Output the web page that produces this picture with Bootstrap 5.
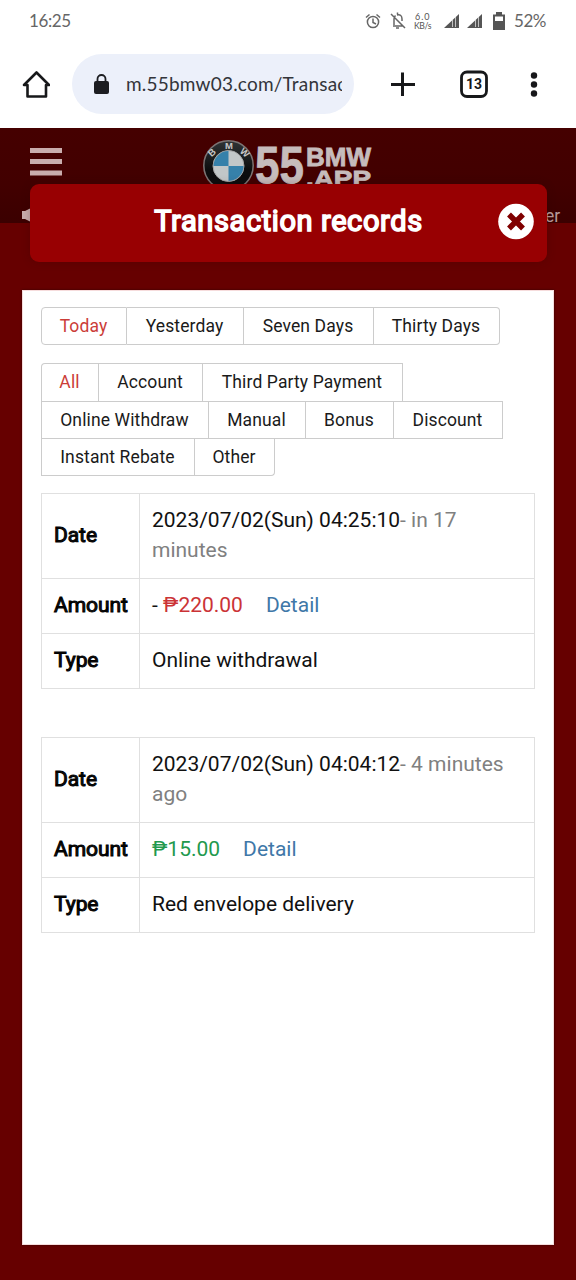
<!DOCTYPE html>
<html lang="en">
<head>
<meta charset="utf-8">
<meta name="viewport" content="width=device-width, initial-scale=1">
<title>Transaction records</title>
<link href="https://cdn.jsdelivr.net/npm/bootstrap@5.3.0/dist/css/bootstrap.min.css" rel="stylesheet">
<style>
body{width:576px;height:1280px;overflow:hidden;background:#660000;font-family:Roboto,"Liberation Sans",sans-serif;color:#111}
svg{display:block;flex:none}
.status-row{height:42px;padding:0 29px;font-family:Lato,sans-serif;font-weight:400;font-size:17px;letter-spacing:-.4px;color:#666}
.browser-row{height:86px;padding:0 20px 2px 22px}
.browser-icons{margin-left:34px}
.address{width:282px;height:60px;background:#ecf0fa;margin-left:22px;padding:0 12px 0 21px}
.address-text{font-family:Lato,sans-serif;font-size:19px;color:#33353a;margin-left:16px;width:217px;letter-spacing:.2px;overflow:hidden;white-space:nowrap;line-height:30px}
.site-head{height:95px;background:linear-gradient(#450000,#420000 60%,#3b0000)}
.title-bar{left:30px;top:184px;width:517px;height:78px;background:#980002;border-radius:9px;box-shadow:0 0 8px rgba(50,0,0,.25)}
.title-text{font-size:29px;font-weight:400;-webkit-text-stroke:1.6px #fff;line-height:34px;letter-spacing:.6px;color:#fff}
.close-icon{right:12px;top:19px}
.panel{width:532px;height:955px;margin:67px 0 0 22px;padding:16px 18px;border:1px solid #f6dcdc;box-shadow:0 0 2px #300}
.btns{display:grid;width:max-content}
.btns .btn{border:1px solid #ccc;border-left-width:0;border-radius:0;padding:0 1px 0 0;height:38px;font-size:17.5px;line-height:35px;letter-spacing:.12px;color:#1a1a1a;white-space:nowrap}
.btns .btn:first-child{border-left-width:1px}
.btns .btn.active{color:#cb3d38;background:#fff;border-color:#ccc}
.c-day{grid-template-columns:86px 117px 130px 126px}
.c-t1{grid-template-columns:58px 104px 200px}
.c-t2{grid-template-columns:168px 97px 88px 109px}
.c-t3{grid-template-columns:154px 80px}
.kinds{margin-top:18px}
.btns.c-t1 .btn{border-bottom-width:0}
.btns.c-t2 .btn{line-height:34px}
.btns.c-t3 .btn{border-top-width:0;height:37px}
.btns .r-l{border-radius:4px 0 0 4px}
.btns .r-r{border-radius:0 4px 4px 0}
.btns.c-t3 .r-r{border-radius:0 0 4px 0}
.btns .r-tl{border-top-left-radius:4px}
.records{width:494px;margin-top:17px;table-layout:fixed;border-collapse:collapse;font-size:21px;line-height:30.5px;letter-spacing:0}
.records.next{margin-top:48px}
.records>tbody>tr>*{border:1px solid #e0e0e0;padding:10px 12px 12px;vertical-align:middle;color:#111}
.records th{width:98px;font-weight:400;-webkit-text-stroke:1px #000;letter-spacing:-.05px;white-space:nowrap;color:#000}
.records tr{height:55px}
.records tr.tall{height:85px}
.muted{color:#808080}.minus{color:#cb3336}.plus{color:#22994d}.go{color:#3f78a8;margin-left:23px;text-decoration:none}
</style>
</head>
<body>
<div class="bg-white">
 <div class="status-row d-flex align-items-center justify-content-between">
  <span id="clock">16:25</span>
  <svg width="185" height="28" viewBox="363 7 185 28" fill="none" stroke="#666" stroke-width="1.5">
   <circle cx="374" cy="22" r="5.6"/><path d="M374 18.500v4l3 1.500M367 17.500l3.500-3M381 17.500l-3.500-3"/>
   <path d="M392 14l14 14M394 26h10M395 25v-6q0-2 1.500-3.500M398 15q5-1 5 4v2M398.500 12.500v2M397 28h3"/>
   <g fill="#555" stroke="none" font-family="Lato"><text x="416" y="20" font-size="9" textLength="14">6.0</text><text x="415" y="28.500" font-size="8.500" textLength="17" lengthAdjust="spacingAndGlyphs">KB/s</text></g>
   <g fill="#555" stroke="none"><path d="M445 28L460 14v14z"/><path d="M468 28L483 14v14z"/><path d="M494 14.500h3V12h6v2.500h3V30h-12z"/></g>
   <path d="M453.500 20v7M456.500 17v10M476.500 20v7M479.500 17v10" stroke="#ddd" stroke-width=".8"/>
   <path d="M496 16.500h8V21h-8z" fill="#fff" stroke="none"/>
   <text x="515" y="27" fill="#666" stroke="none" font-family="Lato" font-size="17" textLength="32">52%</text>
  </svg>
 </div>
 <div class="browser-row d-flex align-items-center">
  <svg width="28" height="30" viewBox="22 69 28 30" fill="none" stroke="#17181a" stroke-width="2.600" stroke-linejoin="round"><path d="M24 85L36.500 72.500 49 85h-3v11.500H27.500V85z"/></svg>
  <div class="address rounded-pill d-flex align-items-center">
   <svg width="17" height="21" viewBox="0 0 17 21"><rect x="1" y="7" width="15" height="13" rx="2" fill="#1c1d21"/><path d="M4.500 8V5a4 4 0 0 1 8 0v3" fill="none" stroke="#1c1d21" stroke-width="1.800"/></svg>
   <div class="address-text">m.55bmw03.com/Transactions</div>
  </div>
  <svg class="browser-icons" width="156" height="30" viewBox="388 69 156 30" fill="none" stroke="#17181a" stroke-width="3"><path d="M391 84.500h24M402.500 72.500v23.500"/><rect x="461.500" y="72" width="25" height="24.500" rx="5.500" stroke-width="2.800"/><text x="474" y="89" fill="#17181a" stroke="none" font-family="Roboto" font-size="14" font-weight="700" text-anchor="middle">13</text><g fill="#17181a" stroke="none"><circle cx="534" cy="75.500" r="3.200"/><circle cx="534" cy="84.500" r="3.200"/><circle cx="534" cy="93.500" r="3.200"/></g></svg>
 </div>
</div>
<header class="site-head">
 <svg width="576" height="95" viewBox="0 128 576 95">
  <defs><linearGradient id="ring" x1="0" y1="0" x2="0" y2="1"><stop stop-color="#303436"/><stop offset=".6" stop-color="#0c0d0e"/></linearGradient></defs>
  <path d="M30 148h32v5H30zM30 159h32v5H30zM30 170.500h32v5H30z" fill="#c9adad"/>
  <circle cx="228.500" cy="165.500" r="24.700" fill="url(#ring)" stroke="#7c7474" stroke-width="1.500"/>
  <circle cx="228.500" cy="166" r="15.500" fill="#c2c7c8" stroke="#a5a5a5"/>
  <path d="M228.500 166v-15a15 15 0 0 0-15 15zM228.500 166v15a15 15 0 0 0 15-15z" fill="#3681aa"/>
  <g fill="#c8c8c8" font-family="Liberation Sans" font-weight="700" font-size="9.500" text-anchor="middle"><text transform="translate(214 155) rotate(-42)">B</text><text x="229" y="149">M</text><text transform="translate(242.500 155) rotate(42)">W</text></g>
  <g fill="#c6bcbc" stroke="#c6bcbc" stroke-width=".8" font-family="Liberation Sans" font-weight="700"><text x="255" y="183" font-size="51" textLength="49" lengthAdjust="spacingAndGlyphs">55</text><text x="306" y="165.500" font-size="25" textLength="65" lengthAdjust="spacingAndGlyphs">BMW</text><text x="306" y="186" font-size="21.500" textLength="65" lengthAdjust="spacingAndGlyphs">.APP</text></g>
  <path d="M22 211h3l6-3v14l-6-3h-3z" fill="#c9adad"/>
  <text x="545" y="221.500" font-family="Roboto" font-size="17.500" fill="#b89a9a">er</text>
 </svg>
</header>
<div class="title-bar position-absolute d-flex justify-content-center pt-3">
 <div class="title-text pt-1">Transaction records</div>
 <svg class="close-icon position-absolute" width="37" height="37" viewBox="0 0 37 37"><circle cx="18" cy="18.500" r="17.800" fill="#fff"/><path d="M11 11.500l14 14M25 11.500l-14 14" stroke="#800000" stroke-width="5.500"/></svg>
</div>
<main class="panel bg-white">
 <div class="btns c-day"><button class="btn active r-l">Today</button><button class="btn">Yesterday</button><button class="btn">Seven Days</button><button class="btn r-r">Thirty Days</button></div>
 <div class="kinds">
  <div class="btns c-t1"><button class="btn active r-tl">All</button><button class="btn">Account</button><button class="btn">Third Party Payment</button></div>
  <div class="btns c-t2"><button class="btn">Online Withdraw</button><button class="btn">Manual</button><button class="btn">Bonus</button><button class="btn">Discount</button></div>
  <div class="btns c-t3"><button class="btn">Instant Rebate</button><button class="btn r-r">Other</button></div>
 </div>
 <table class="records"><tbody>
  <tr class="tall"><th>Date</th><td>2023/07/02(Sun) 04:25:10<span class="muted">- in 17 minutes</span></td></tr>
  <tr><th>Amount</th><td>- <span class="minus">₱220.00</span><a class="go">Detail</a></td></tr>
  <tr><th>Type</th><td>Online withdrawal</td></tr></tbody></table>
 <table class="records next"><tbody>
  <tr class="tall"><th>Date</th><td>2023/07/02(Sun) 04:04:12<span class="muted">- 4 minutes ago</span></td></tr>
  <tr><th>Amount</th><td><span class="plus">₱15.00</span><a class="go">Detail</a></td></tr>
  <tr><th>Type</th><td>Red envelope delivery</td></tr></tbody></table>
</main>
<script src="https://cdn.jsdelivr.net/npm/bootstrap@5.3.0/dist/js/bootstrap.bundle.min.js"></script>
</body>
</html>
